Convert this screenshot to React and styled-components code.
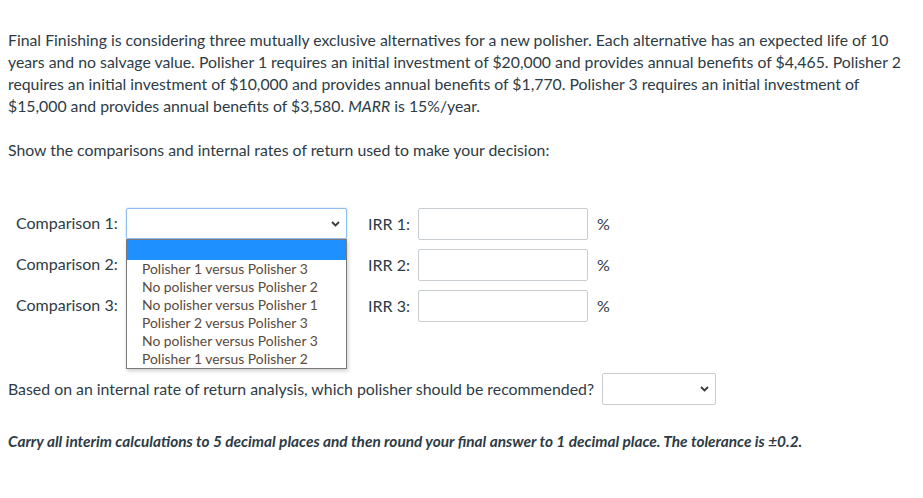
import React from 'react'
import styled, { createGlobalStyle } from 'styled-components'

const GlobalStyle = createGlobalStyle`
  body {
    margin: 0;
    background: #ffffff;
    font-family: Lato, "Open Sans", sans-serif;
    color: #2d3b45;
  }
`

const options = [
  'Polisher 1 versus Polisher 3',
  'No polisher versus Polisher 2',
  'No polisher versus Polisher 1',
  'Polisher 2 versus Polisher 3',
  'No polisher versus Polisher 3',
  'Polisher 1 versus Polisher 2',
]

const Chevron = () => (
  <svg width="9" height="6" viewBox="0 0 9 6">
    <path d="M1 1l3.5 3.5L8 1" fill="none" stroke="#3a3a3a" strokeWidth="1.8" />
  </svg>
)

const App = () => {
  return (
    <Page>
      <GlobalStyle />
      <Text>
        Final Finishing is considering three mutually exclusive alternatives for a new polisher. Each alternative has an expected life of 10
        <br />
        years and no salvage value. Polisher 1 requires an initial investment of $20,000 and provides annual benefits of $4,465. Polisher 2
        <br />
        requires an initial investment of $10,000 and provides annual benefits of $1,770. Polisher 3 requires an initial investment of
        <br />
        $15,000 and provides annual benefits of $3,580. <em>MARR</em> is 15%/year.
      </Text>
      <Text>Show the comparisons and internal rates of return used to make your decision:</Text>

      <Grid>
        {[1, 2, 3].map((n) => (
          <React.Fragment key={n}>
            <Label>Comparison {n}:</Label>
            <SelectCell>
              {n === 1 ? (
                <>
                  <SelectBox focused>
                    <Chevron />
                  </SelectBox>
                  <OptionList>
                    <OptionRow selected />
                    {options.map((o) => (
                      <OptionRow key={o}>{o}</OptionRow>
                    ))}
                  </OptionList>
                </>
              ) : (
                <SelectBox>
                  <Chevron />
                </SelectBox>
              )}
            </SelectCell>
            <IrrLabel>IRR {n}:</IrrLabel>
            <Input />
            <Percent>%</Percent>
          </React.Fragment>
        ))}
      </Grid>

      <Question>
        Based on an internal rate of return analysis, which polisher should be recommended?
        <SmallSelect>
          <Chevron />
        </SmallSelect>
      </Question>

      <Note>
        Carry all interim calculations to 5 decimal places and then round your final answer to 1 decimal place. The tolerance is ±0.2.
      </Note>
    </Page>
  )
}

const Page = styled.div`
  padding: 29px 8px 0 8px;
  font-size: 15.8px;
  line-height: 22px;
`

const Text = styled.p`
  margin: 0 0 22px 0;
  white-space: nowrap;
  em {
    font-style: italic;
  }
`

const Grid = styled.div`
  display: grid;
  grid-template-columns: 110px 221px 71px 170px auto;
  grid-auto-rows: 32px;
  row-gap: 9px;
  margin: 47px 0 0 8px;
  align-items: center;
  font-size: 16px;
`

const Label = styled.div`
  line-height: 30px;
  align-self: start;
`

const SelectCell = styled.div`
  position: relative;
  height: 32px;
`

const SelectBox = styled.div`
  box-sizing: border-box;
  height: 31px;
  border: 1px solid ${(p) => (p.focused ? '#8fbdf0' : '#c7cdd1')};
  border-radius: 2px;
  background: #fff;
  display: flex;
  align-items: center;
  justify-content: flex-end;
  padding-right: 6px;
  box-shadow: ${(p) => (p.focused ? '0 0 2px rgba(100,160,230,0.5)' : 'none')};
`

const OptionList = styled.div`
  position: absolute;
  top: 31px;
  left: 0;
  width: 221px;
  box-sizing: border-box;
  border: 1px solid #7a7a7a;
  background: #fff;
  box-shadow: 1px 2px 4px rgba(0, 0, 0, 0.2);
  z-index: 5;
`

const OptionRow = styled.div`
  height: ${(p) => (p.selected ? '20px' : '18px')};
  line-height: 18px;
  font-size: 13.9px;
  padding-left: 15px;
  color: #5a4a3c;
  background: ${(p) => (p.selected ? '#1e90ff' : '#fff')};
  white-space: nowrap;
`

const IrrLabel = styled.div`
  padding-left: 21px;
`

const Input = styled.div`
  box-sizing: border-box;
  height: 32px;
  border: 1px solid #c7cdd1;
  border-radius: 2px;
  background: #fff;
`

const Percent = styled.div`
  padding-left: 9px;
`

const Question = styled.div`
  display: flex;
  align-items: center;
  gap: 8px;
  margin-top: 51px;
  height: 32px;
  font-size: 15.85px;
`

const SmallSelect = styled.div`
  box-sizing: border-box;
  width: 114px;
  height: 32px;
  border: 1px solid #c7cdd1;
  border-radius: 2px;
  background: #fff;
  display: flex;
  align-items: center;
  justify-content: flex-end;
  padding-right: 6px;
`

const Note = styled.p`
  margin: 25px 0 0 0;
  font-weight: 700;
  font-style: italic;
  font-size: 15.4px;
`

export default App
